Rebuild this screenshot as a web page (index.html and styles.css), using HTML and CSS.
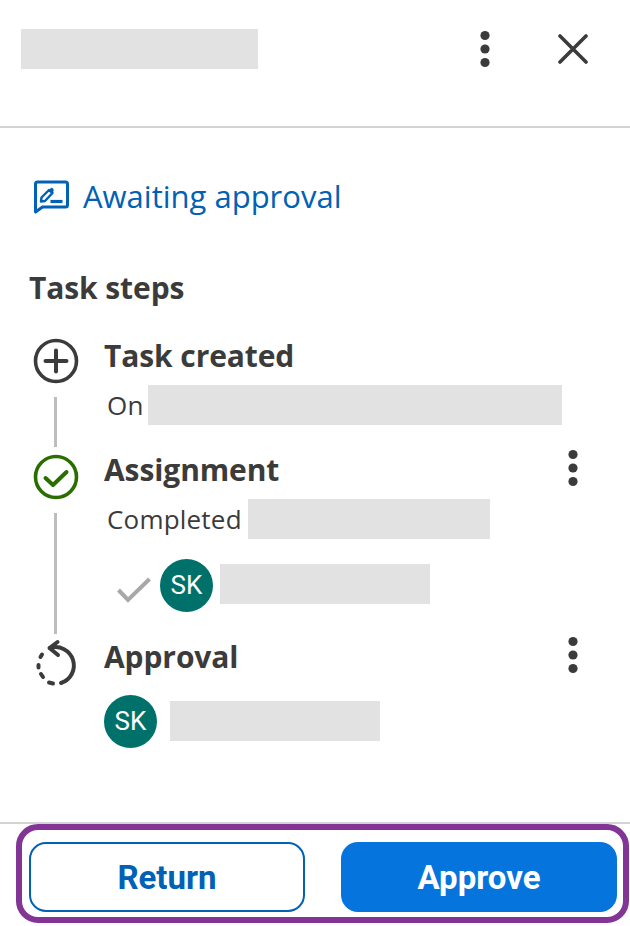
FILE: index.html
```html
<!DOCTYPE html>
<html lang="en">
<head>
<meta charset="utf-8">
<title>Task</title>
<link rel="stylesheet" href="styles.css">
</head>
<body>
<div class="page">
  <header class="header">
    <div class="ph ph-title"></div>
    <div class="header-actions">
      <svg class="kebab" viewBox="0 0 12 40"><circle cx="6" cy="6.5" r="4.6"/><circle cx="6" cy="20" r="4.6"/><circle cx="6" cy="33.5" r="4.6"/></svg>
      <svg class="close" viewBox="0 0 30 30"><path d="M2 2 L28 28 M28 2 L2 28"/></svg>
    </div>
  </header>
  <main class="main">
    <div class="status">
      <svg class="status-icon" viewBox="0 0 36 34"><path class="bubble" d="M2 4 Q2 2 4 2 H32 Q34 2 34 4 V25 Q34 27 32 27 H9 L2 32 Z"/><path class="pen" d="M7.5 21.5 L8 17.5 L15.5 10 L19 13 L11.5 21 Z"/><path class="pen-tip" d="M15.5 10 L17.5 8 Q18.5 7.5 19.5 8.5 Q20.8 9.8 20 11 L19 13 Z"/><path class="pen-line" d="M17 21.5 H29"/></svg>
      <span>Awaiting approval</span>
    </div>
    <h2 class="heading">Task steps</h2>
    <ol class="steps">
      <li class="step step-created">
        <div class="rail">
          <svg class="step-icon" viewBox="0 0 48 48"><circle class="ring" cx="24" cy="24" r="20.5"/><path class="glyph" d="M24 13.5 V34.5 M13.5 24 H34.5"/></svg>
          <div class="rail-line line-short"></div>
        </div>
        <div class="content">
          <div class="title-row"><h3 class="title">Task created</h3></div>
          <div class="detail"><span>On</span><div class="ph ph-on"></div></div>
        </div>
      </li>
      <li class="step step-assign">
        <div class="rail rail-down2">
          <svg class="step-icon done" viewBox="0 0 48 48"><circle class="ring" cx="24" cy="24" r="20.5"/><path class="glyph" d="M13.5 25 L21 32 L34.5 19"/></svg>
          <div class="rail-line line-long"></div>
        </div>
        <div class="content">
          <div class="title-row">
            <h3 class="title">Assignment</h3>
            <svg class="kebab step-kebab" viewBox="0 0 12 40"><circle cx="6" cy="6.5" r="4.6"/><circle cx="6" cy="20" r="4.6"/><circle cx="6" cy="33.5" r="4.6"/></svg>
          </div>
          <div class="detail"><span>Completed</span><div class="ph ph-completed"></div></div>
          <div class="person person-checked">
            <svg class="tick" viewBox="0 0 36 27"><path d="M2.5 14 L12 24 L33.5 3"/></svg>
            <div class="avatar">SK</div>
            <div class="ph ph-name"></div>
          </div>
        </div>
      </li>
      <li class="step step-approval">
        <div class="rail rail-down1">
          <svg class="step-icon pending" viewBox="0 0 48 48"><path class="glyph" d="M18 9 A18 18 0 1 1 29 44"/><path class="glyph" d="M25.5 3 L17.5 9 L26 16"/><path class="glyph" d="M21 44.5 L17 43.5 M11 38 L9 35 M6.5 28.5 L6.5 26 M8.5 18 L10 15.5"/></svg>
        </div>
        <div class="content">
          <div class="title-row">
            <h3 class="title">Approval</h3>
            <svg class="kebab step-kebab" viewBox="0 0 12 40"><circle cx="6" cy="6.5" r="4.6"/><circle cx="6" cy="20" r="4.6"/><circle cx="6" cy="33.5" r="4.6"/></svg>
          </div>
          <div class="person person-approver">
            <div class="avatar">SK</div>
            <div class="ph ph-name"></div>
          </div>
        </div>
      </li>
    </ol>
  </main>
  <footer class="footer">
    <div class="actions">
      <button class="btn btn-outline" type="button">Return</button>
      <button class="btn btn-solid" type="button">Approve</button>
    </div>
  </footer>
</div>
</body>
</html>
```

FILE: styles.css
```css
* { box-sizing: border-box; }
html, body { margin: 0; padding: 0; background: #fff; }
body { font-family: "Open Sans", "Noto Sans", sans-serif; color: #3b3b3b; }
.page { width: 630px; height: 926px; display: flex; flex-direction: column; overflow: hidden; }

.ph { background: #e2e2e2; height: 40px; flex: none; }
.ph-title { width: 237px; }
.ph-on { width: 414px; margin-left: 4px; }
.ph-completed { width: 242px; margin-left: 6px; }
.ph-name { width: 210px; }

.header { height: 128px; flex: none; border-bottom: 2px solid #d4d4d4; padding: 29px 42px 0 21px; display: flex; justify-content: space-between; align-items: flex-start; }
.header-actions { display: flex; align-items: center; gap: 67px; }
.kebab { width: 12px; height: 40px; fill: #3b3b3b; display: block; flex: none; }
.close { width: 30px; height: 30px; fill: none; stroke: #3b3b3b; stroke-width: 3.6; stroke-linecap: round; display: block; }

.main { flex: 1; padding: 49px 51px 0 30px; }
.status { display: flex; align-items: center; gap: 13px; margin-left: 3px; height: 40px; font-size: 31px; line-height: 38px; color: #0061b5; }
.status span { margin-top: -2px; }
.status-icon { width: 37px; height: 34px; flex: none; }
.bubble { fill: none; stroke: #0061b5; stroke-width: 3; stroke-linejoin: round; }
.pen { fill: none; stroke: #0061b5; stroke-width: 2.4; stroke-linejoin: round; }
.pen-tip { fill: #0061b5; }
.pen-line { fill: none; stroke: #0061b5; stroke-width: 3.2; }

.heading { margin: 52px 0 0 -1px; font-size: 30px; line-height: 38px; height: 40px; font-weight: 700; letter-spacing: -0.1px; }

.steps { list-style: none; margin: 28px 0 0; padding: 0; }
.step { display: flex; gap: 23px; }
.step-created { height: 114px; }
.step-assign { height: 187px; }
.rail { width: 51px; flex: none; display: flex; flex-direction: column; align-items: center; }
.rail-down2 { padding-top: 2px; }
.rail-down1 { padding-top: 1px; }
.step-icon { width: 48px; height: 48px; display: block; flex: none; fill: none; }
.ring { stroke: #3b3b3b; stroke-width: 3.6; }
.glyph { stroke: #3b3b3b; stroke-width: 4; stroke-linecap: round; stroke-linejoin: round; fill: none; }
.done .ring { stroke: #2a6e00; }
.done .glyph { stroke: #2a6e00; }
.rail-line { width: 2.5px; background: #bdbdbd; margin-top: 12px; flex: none; }
.line-short { height: 50px; }
.line-long { height: 121px; }

.content { flex: 1; min-width: 0; }
.title-row { display: flex; justify-content: space-between; align-items: flex-start; height: 40px; }
.title { margin: 0; font-size: 30px; line-height: 38px; font-weight: 700; letter-spacing: -0.1px; }
.step-kebab { margin-top: -3px; }
.detail { display: flex; align-items: center; margin-top: 8px; padding-left: 3px; font-size: 26px; line-height: 40px; letter-spacing: 0.2px; }

.person { display: flex; align-items: center; }
.person-checked { margin: 20px 0 0 12px; }
.person-approver { margin-top: 17px; }
.person-approver .avatar { margin-right: 13px; }
.person-checked .avatar { margin: 0 7px 0 8px; }
.tick { width: 36px; height: 27px; fill: none; stroke: #a8a8a8; stroke-width: 4; stroke-linejoin: miter; flex: none; margin-top: 8px; }
.avatar { width: 53px; height: 53px; border-radius: 50%; background: #00716a; color: #fff; font-family: Roboto, sans-serif; font-size: 26px; line-height: 53px; text-align: center; flex: none; }
.person-checked .ph { margin-top: -4px; }
.person-approver .ph { margin-top: -2px; }

.footer { flex: none; border-top: 2px solid #d4d4d4; height: 104px; padding: 0 1px 3px 16px; }
.actions { height: 99px; border: 6px solid #823595; border-radius: 22px; padding: 12px 6px 5px 7px; display: grid; grid-template-columns: 1fr 1fr; column-gap: 36px; background: #fff; }
.btn { height: 70px; border-radius: 17px; font-family: Roboto, sans-serif; font-size: 33px; font-weight: 700; }
.btn-outline { background: #fff; border: 2px solid #0061b5; color: #0061b5; }
.btn-solid { background: #0574dc; border: 0; color: #fff; }
```
